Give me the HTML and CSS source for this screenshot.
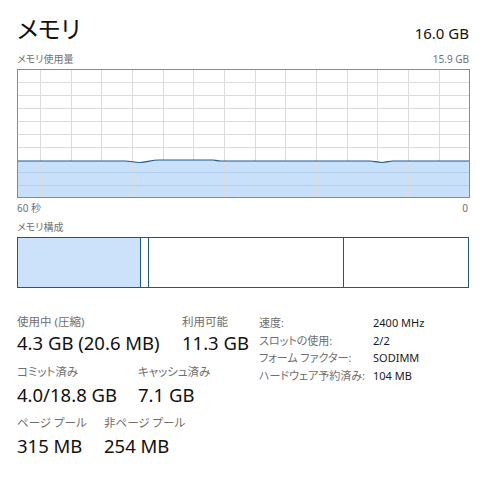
FILE: index.html
```html
<!DOCTYPE html>
<html lang="ja">
<head>
<meta charset="utf-8">
<link rel="stylesheet" href="styles.css">
</head>
<body>
<div class="page">
  <div class="header">
    <div class="title">メモリ</div>
    <div class="total">16.0 GB</div>
  </div>
  <div class="caption-row top-caption">
    <span>メモリ使用量</span>
    <span>15.9 GB</span>
  </div>
  <svg class="chart" width="453" height="129" viewBox="0 0 453 129">
    <rect x="0" y="0" width="453" height="129" fill="#ffffff"/>
    <path d="M0.5 92 L108 92 C114 92 117 93.5 123 93.5 C129 93.5 134 91 142 91 L196 91 C198 91 200 92 204 92 L353 92 C357 92 360 93.5 365 93.5 C370 93.5 372 92 376 92 L452.5 92 L452.5 128.5 L0.5 128.5 Z" fill="#c9e0fa"/>
    <g stroke="#dcdcdc" stroke-width="1">
      <line x1="0" y1="13.5" x2="453" y2="13.5"/>
      <line x1="0" y1="26.5" x2="453" y2="26.5"/>
      <line x1="0" y1="39.5" x2="453" y2="39.5"/>
      <line x1="0" y1="52.5" x2="453" y2="52.5"/>
      <line x1="0" y1="65.5" x2="453" y2="65.5"/>
      <line x1="0" y1="78.5" x2="453" y2="78.5"/>
      <line x1="23.5" y1="0" x2="23.5" y2="129"/>
      <line x1="54.5" y1="0" x2="54.5" y2="129"/>
      <line x1="84.5" y1="0" x2="84.5" y2="129"/>
      <line x1="115.5" y1="0" x2="115.5" y2="129"/>
      <line x1="146.5" y1="0" x2="146.5" y2="129"/>
      <line x1="176.5" y1="0" x2="176.5" y2="129"/>
      <line x1="207.5" y1="0" x2="207.5" y2="129"/>
      <line x1="238.5" y1="0" x2="238.5" y2="129"/>
      <line x1="268.5" y1="0" x2="268.5" y2="129"/>
      <line x1="299.5" y1="0" x2="299.5" y2="129"/>
      <line x1="330.5" y1="0" x2="330.5" y2="129"/>
      <line x1="360.5" y1="0" x2="360.5" y2="129"/>
      <line x1="391.5" y1="0" x2="391.5" y2="129"/>
      <line x1="422.5" y1="0" x2="422.5" y2="129"/>
    </g>
    <g stroke="#b3cdea" stroke-width="1">
      <line x1="0" y1="103.5" x2="453" y2="103.5"/>
      <line x1="0" y1="116.5" x2="453" y2="116.5"/>
    </g>
    <path d="M0.5 92 L108 92 C114 92 117 93.5 123 93.5 C129 93.5 134 91 142 91 L196 91 C198 91 200 92 204 92 L353 92 C357 92 360 93.5 365 93.5 C370 93.5 372 92 376 92 L452.5 92" fill="none" stroke="#1e5b8f" stroke-width="1.2"/>
    <rect x="0.5" y="0.5" width="452" height="128" fill="none" stroke="#8a8a8a" stroke-width="1"/>
  </svg>
  <div class="caption-row axis">
    <span>60 秒</span>
    <span>0</span>
  </div>
  <div class="caption-row comp-caption">
    <span>メモリ構成</span>
  </div>
  <div class="composition">
    <div class="seg seg-inuse"></div>
    <div class="seg seg-modified"></div>
    <div class="seg seg-standby"></div>
    <div class="seg seg-free"></div>
  </div>
  <div class="stats">
    <div class="stats-left">
      <div class="stat-row row1">
        <div class="stat w1a">
          <div class="stat-label">使用中 (圧縮)</div>
          <div class="stat-value">4.3 GB (20.6 MB)</div>
        </div>
        <div class="stat">
          <div class="stat-label">利用可能</div>
          <div class="stat-value">11.3 GB</div>
        </div>
      </div>
      <div class="stat-row row2">
        <div class="stat w2a">
          <div class="stat-label">コミット済み</div>
          <div class="stat-value">4.0/18.8 GB</div>
        </div>
        <div class="stat">
          <div class="stat-label">キャッシュ済み</div>
          <div class="stat-value">7.1 GB</div>
        </div>
      </div>
      <div class="stat-row row3">
        <div class="stat w3a">
          <div class="stat-label">ページ プール</div>
          <div class="stat-value">315 MB</div>
        </div>
        <div class="stat">
          <div class="stat-label">非ページ プール</div>
          <div class="stat-value">254 MB</div>
        </div>
      </div>
    </div>
    <div class="stats-right">
      <div class="info-row"><span class="info-key">速度:</span><span class="info-val">2400 MHz</span></div>
      <div class="info-row"><span class="info-key">スロットの使用:</span><span class="info-val">2/2</span></div>
      <div class="info-row"><span class="info-key">フォーム ファクター:</span><span class="info-val">SODIMM</span></div>
      <div class="info-row"><span class="info-key">ハードウェア予約済み:</span><span class="info-val">104 MB</span></div>
    </div>
  </div>
</div>
</body>
</html>
```
FILE: styles.css
```css
html, body {
  margin: 0;
  padding: 0;
  background: #ffffff;
}
body {
  font-family: "Noto Sans", "Noto Sans CJK JP", sans-serif;
  font-feature-settings: "palt";
  color: #1a1a1a;
}
.page {
  width: 452px;
  padding: 13px 0 0 17px;
}
.header {
  display: flex;
  justify-content: space-between;
  align-items: flex-end;
  height: 32px;
}
.title {
  font-size: 24px;
  line-height: 32px;
  color: #111111;
}
.total {
  font-size: 15px;
  line-height: 20px;
  margin-bottom: 2px;
  color: #111111;
}
.caption-row {
  display: flex;
  justify-content: space-between;
  font-size: 10px;
  line-height: 14px;
  color: #717171;
}
.top-caption {
  margin-top: 7px;
  margin-bottom: 3px;
}
.chart {
  display: block;
}
.axis {
  margin-top: 3px;
  padding-right: 1px;
}
.comp-caption {
  margin-top: 5px;
  margin-bottom: 3px;
}
.composition {
  display: flex;
  height: 51px;
  box-sizing: border-box;
  border: 1px solid #22548a;
}
.seg {
  box-sizing: border-box;
  height: 100%;
}
.seg-inuse {
  width: 123px;
  background: #cce1fa;
  border-right: 1px solid #22548a;
}
.seg-modified {
  width: 8px;
  background: #ffffff;
  border-right: 1px solid #22548a;
}
.seg-standby {
  width: 195px;
  background: #ffffff;
  border-right: 1px solid #22548a;
}
.seg-free {
  flex: 1;
  background: #ffffff;
}
.stats {
  display: flex;
  margin-top: 26px;
}
.stats-left {
  width: 242px;
}
.stat-row {
  display: flex;
}
.row2 {
  margin-top: 8px;
}
.row3 {
  margin-top: 7px;
}
.stat-label {
  font-size: 11.5px;
  line-height: 16px;
  color: #6e6e6e;
}
.stat-value {
  font-size: 18.5px;
  line-height: 26px;
  color: #111111;
}
.row2 .stat-value,
.row3 .stat-value {
  margin-top: 2px;
}
.w1a { width: 165px; }
.w2a { width: 121px; }
.w3a { width: 87px; }
.info-row {
  display: flex;
  font-size: 11px;
  line-height: 17.7px;
}
.info-key {
  width: 114px;
  color: #6e6e6e;
}
.info-val {
  color: #1a1a1a;
}
```
